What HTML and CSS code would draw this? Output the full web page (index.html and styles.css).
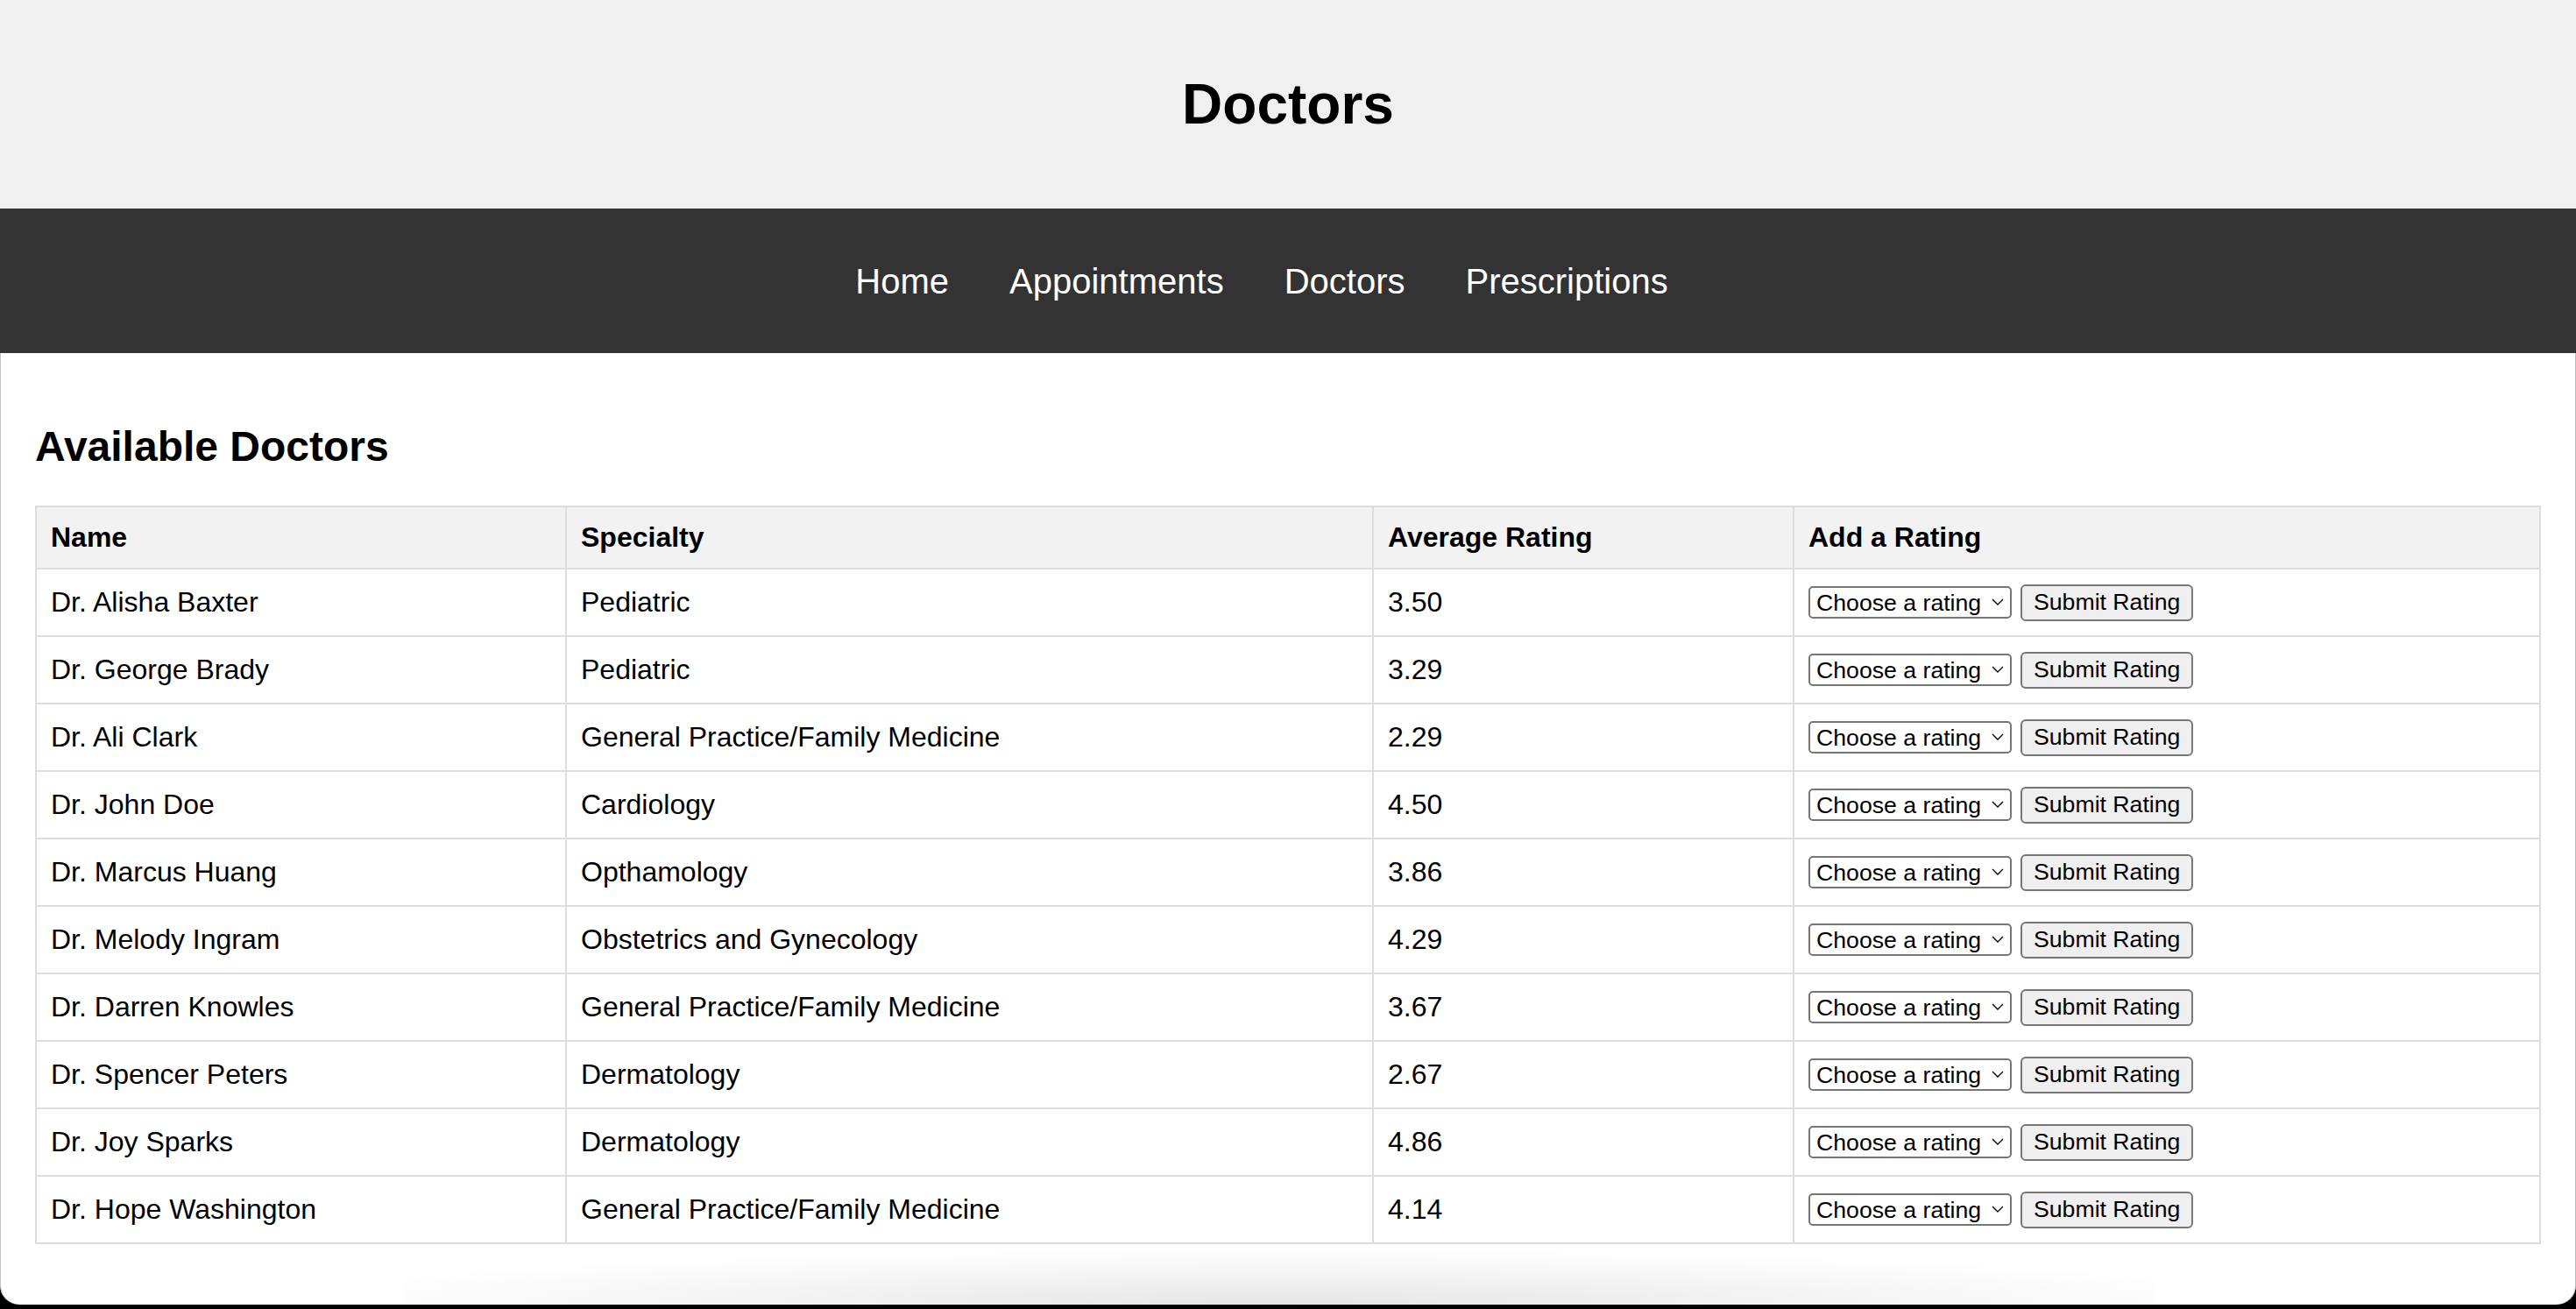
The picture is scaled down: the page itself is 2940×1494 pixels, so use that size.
FILE: index.html
```html
<!DOCTYPE html>
<html lang="en">
<head>
<meta charset="utf-8">
<title>Doctors</title>
<link rel="stylesheet" href="styles.css">
</head>
<body>
<div class="window">
  <header class="site-header">
    <h1 class="site-title">Doctors</h1>
  </header>
  <nav class="site-nav">
    <a class="nav-link" href="#">Home</a>
    <a class="nav-link" href="#">Appointments</a>
    <a class="nav-link" href="#">Doctors</a>
    <a class="nav-link" href="#">Prescriptions</a>
  </nav>
  <main class="content">
    <h2 class="section-title">Available Doctors</h2>
    <table class="doctors">
      <colgroup>
        <col class="col-name">
        <col class="col-specialty">
        <col class="col-avg">
        <col class="col-add">
      </colgroup>
      <thead>
        <tr><th>Name</th><th>Specialty</th><th>Average Rating</th><th>Add a Rating</th></tr>
      </thead>
      <tbody>
        <tr><td>Dr. Alisha Baxter</td><td>Pediatric</td><td>3.50</td><td><div class="rate"><span class="select-wrap"><select class="rate-select"><option>Choose a rating</option><option>1</option><option>2</option><option>3</option><option>4</option><option>5</option></select><svg class="chev" viewBox="0 0 14 8" width="14" height="8"><path d="M1 1 L7 7 L13 1" fill="none" stroke="#000" stroke-width="1.4"/></svg></span><button class="rate-btn" type="button">Submit Rating</button></div></td></tr>
        <tr><td>Dr. George Brady</td><td>Pediatric</td><td>3.29</td><td><div class="rate"><span class="select-wrap"><select class="rate-select"><option>Choose a rating</option><option>1</option><option>2</option><option>3</option><option>4</option><option>5</option></select><svg class="chev" viewBox="0 0 14 8" width="14" height="8"><path d="M1 1 L7 7 L13 1" fill="none" stroke="#000" stroke-width="1.4"/></svg></span><button class="rate-btn" type="button">Submit Rating</button></div></td></tr>
        <tr><td>Dr. Ali Clark</td><td>General Practice/Family Medicine</td><td>2.29</td><td><div class="rate"><span class="select-wrap"><select class="rate-select"><option>Choose a rating</option><option>1</option><option>2</option><option>3</option><option>4</option><option>5</option></select><svg class="chev" viewBox="0 0 14 8" width="14" height="8"><path d="M1 1 L7 7 L13 1" fill="none" stroke="#000" stroke-width="1.4"/></svg></span><button class="rate-btn" type="button">Submit Rating</button></div></td></tr>
        <tr><td>Dr. John Doe</td><td>Cardiology</td><td>4.50</td><td><div class="rate"><span class="select-wrap"><select class="rate-select"><option>Choose a rating</option><option>1</option><option>2</option><option>3</option><option>4</option><option>5</option></select><svg class="chev" viewBox="0 0 14 8" width="14" height="8"><path d="M1 1 L7 7 L13 1" fill="none" stroke="#000" stroke-width="1.4"/></svg></span><button class="rate-btn" type="button">Submit Rating</button></div></td></tr>
        <tr><td>Dr. Marcus Huang</td><td>Opthamology</td><td>3.86</td><td><div class="rate"><span class="select-wrap"><select class="rate-select"><option>Choose a rating</option><option>1</option><option>2</option><option>3</option><option>4</option><option>5</option></select><svg class="chev" viewBox="0 0 14 8" width="14" height="8"><path d="M1 1 L7 7 L13 1" fill="none" stroke="#000" stroke-width="1.4"/></svg></span><button class="rate-btn" type="button">Submit Rating</button></div></td></tr>
        <tr><td>Dr. Melody Ingram</td><td>Obstetrics and Gynecology</td><td>4.29</td><td><div class="rate"><span class="select-wrap"><select class="rate-select"><option>Choose a rating</option><option>1</option><option>2</option><option>3</option><option>4</option><option>5</option></select><svg class="chev" viewBox="0 0 14 8" width="14" height="8"><path d="M1 1 L7 7 L13 1" fill="none" stroke="#000" stroke-width="1.4"/></svg></span><button class="rate-btn" type="button">Submit Rating</button></div></td></tr>
        <tr><td>Dr. Darren Knowles</td><td>General Practice/Family Medicine</td><td>3.67</td><td><div class="rate"><span class="select-wrap"><select class="rate-select"><option>Choose a rating</option><option>1</option><option>2</option><option>3</option><option>4</option><option>5</option></select><svg class="chev" viewBox="0 0 14 8" width="14" height="8"><path d="M1 1 L7 7 L13 1" fill="none" stroke="#000" stroke-width="1.4"/></svg></span><button class="rate-btn" type="button">Submit Rating</button></div></td></tr>
        <tr><td>Dr. Spencer Peters</td><td>Dermatology</td><td>2.67</td><td><div class="rate"><span class="select-wrap"><select class="rate-select"><option>Choose a rating</option><option>1</option><option>2</option><option>3</option><option>4</option><option>5</option></select><svg class="chev" viewBox="0 0 14 8" width="14" height="8"><path d="M1 1 L7 7 L13 1" fill="none" stroke="#000" stroke-width="1.4"/></svg></span><button class="rate-btn" type="button">Submit Rating</button></div></td></tr>
        <tr><td>Dr. Joy Sparks</td><td>Dermatology</td><td>4.86</td><td><div class="rate"><span class="select-wrap"><select class="rate-select"><option>Choose a rating</option><option>1</option><option>2</option><option>3</option><option>4</option><option>5</option></select><svg class="chev" viewBox="0 0 14 8" width="14" height="8"><path d="M1 1 L7 7 L13 1" fill="none" stroke="#000" stroke-width="1.4"/></svg></span><button class="rate-btn" type="button">Submit Rating</button></div></td></tr>
        <tr><td>Dr. Hope Washington</td><td>General Practice/Family Medicine</td><td>4.14</td><td><div class="rate"><span class="select-wrap"><select class="rate-select"><option>Choose a rating</option><option>1</option><option>2</option><option>3</option><option>4</option><option>5</option></select><svg class="chev" viewBox="0 0 14 8" width="14" height="8"><path d="M1 1 L7 7 L13 1" fill="none" stroke="#000" stroke-width="1.4"/></svg></span><button class="rate-btn" type="button">Submit Rating</button></div></td></tr>
      </tbody>
    </table>
  </main>
  <div class="dock-shadow"></div>
</div>
</body>
</html>
```
FILE: styles.css
```css
html, body {
  margin: 0;
  padding: 0;
  background: #000;
}

body {
  font-family: "Liberation Sans", Arial, Helvetica, sans-serif;
  color: #000;
}

.window {
  position: relative;
  min-height: calc(100vh - 5px);
  background: #fff;
  border-radius: 0 0 22px 22px;
  overflow: hidden;
  box-shadow: inset 1px 0 0 rgba(120, 120, 120, 0.45), inset -1px 0 0 rgba(120, 120, 120, 0.45);
}

.site-header {
  background: #f0f0f0;
  padding: 40px 0;
  text-align: center;
}

.site-title {
  margin: 43px 0;
  font-size: 64px;
  line-height: 72px;
  font-weight: bold;
}

.site-nav {
  background: #333;
  height: 165px;
  display: flex;
  justify-content: center;
  align-items: center;
  gap: 9px;
}

.nav-link {
  color: #fff;
  text-decoration: none;
  font-size: 40px;
  line-height: 46px;
  margin-right: 60px;
}

.content {
  padding: 40px;
}

.section-title {
  margin: 40px 0;
  font-size: 48px;
  line-height: 54px;
  font-weight: bold;
}

.doctors {
  width: 100%;
  border-collapse: collapse;
  table-layout: fixed;
  font-size: 32px;
}

.col-name { width: 605px; }
.col-specialty { width: 921px; }
.col-avg { width: 480px; }

.doctors th,
.doctors td {
  border: 2px solid #ddd;
  padding: 16px;
  text-align: left;
  vertical-align: middle;
  line-height: 37px;
}

.doctors th {
  background: #f2f2f2;
  font-weight: bold;
}

.rate {
  display: flex;
  align-items: center;
  gap: 10px;
  height: 43px;
}

.select-wrap {
  position: relative;
  display: inline-flex;
}

.rate-select {
  appearance: none;
  -webkit-appearance: none;
  width: 232px;
  height: 37px;
  margin: 0;
  padding: 0 0 0 7px;
  border: 2px solid #767676;
  border-radius: 5px;
  background: #fff;
  color: #000;
  font-family: "Liberation Sans", Arial, sans-serif;
  font-size: 26.67px;
}

.chev {
  position: absolute;
  right: 9px;
  top: 14px;
  pointer-events: none;
}

.rate-btn {
  height: 42px;
  margin: 0;
  padding: 0 13px;
  border: 2px solid #767676;
  border-radius: 6px;
  background: #efefef;
  color: #000;
  font-family: "Liberation Sans", Arial, sans-serif;
  font-size: 26.67px;
  line-height: normal;
}

.dock-shadow {
  position: absolute;
  left: 460px;
  right: 480px;
  bottom: 0;
  height: 64px;
  background: radial-gradient(ellipse 58% 100% at 50% 100%, rgba(0, 0, 0, 0.1), rgba(0, 0, 0, 0.04) 60%, rgba(0, 0, 0, 0));
  pointer-events: none;
}
```
